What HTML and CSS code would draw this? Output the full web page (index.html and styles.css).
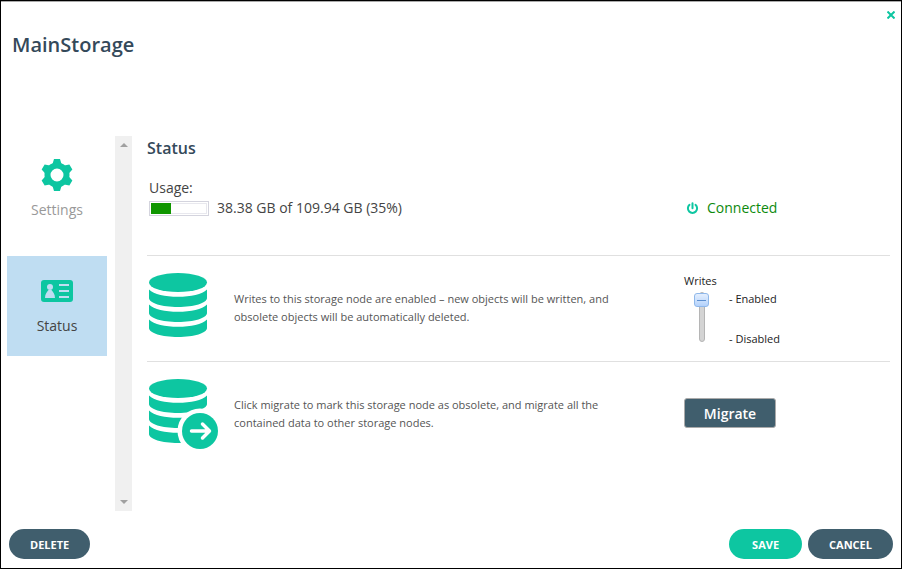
FILE: index.html
```html
<!DOCTYPE html>
<html lang="en">
<head>
  <meta charset="UTF-8">
  <meta name="viewport" content="width=device-width, initial-scale=1">
  <title>MainStorage</title>
  <link rel="stylesheet" href="styles.css">
</head>
<body>

  <div class="dialog" role="dialog" aria-labelledby="dialogTitle">
    <header class="dialog-header">
      <h1 id="dialogTitle">MainStorage</h1>
      <button type="button" class="close" aria-label="Close">
        <svg width="8" height="8" viewBox="0 0 8 8"><path d="M.5.5l7 7M7.500.5l-7 7" stroke="currentColor" stroke-width="2"/></svg>
      </button>
    </header>

    <div class="dialog-body">
      <nav class="sidebar">
        <a href="#settings" class="tab">
          <svg width="32" height="32" viewBox="-16 -16 32 32" fill="currentColor">
            <path d="M-3-16h6l1.500 5h-9zM-3 16h6l1.500-5h-9z"/>
            <path d="M-3-16h6l1.500 5h-9zM-3 16h6l1.500-5h-9z" transform="rotate(60)"/>
            <path d="M-3-16h6l1.500 5h-9zM-3 16h6l1.500-5h-9z" transform="rotate(120)"/>
            <circle r="9.500" fill="none" stroke="currentColor" stroke-width="6"/>
          </svg>
          <span>Settings</span>
        </a>
        <a href="#status" class="tab active">
          <svg width="32" height="32" viewBox="0 0 32 32">
            <rect y="5" width="32" height="22" rx="3" fill="currentColor"/>
            <g fill="#bfddf2">
              <circle cx="9" cy="12" r="3"/>
              <path d="M4 23c0-4 2-6 3.500-8h3c1.500 2 3.500 4 3.500 8z"/>
            </g>
            <path d="M18 10h10M18 16h10M18 22h10" stroke="#bfddf2" stroke-width="2"/>
          </svg>
          <span>Status</span>
        </a>
      </nav>

      <div class="scrollbar" aria-hidden="true">
        <span class="arrow-up"></span>
        <span class="arrow-down"></span>
      </div>

      <main class="content" id="status">
        <h2>Status</h2>

        <section class="row usage-row">
          <div class="usage">
            <div id="usageLabel">Usage:</div>
            <div class="usage-line">
              <div class="bar" role="meter" aria-labelledby="usageLabel" aria-valuemin="0" aria-valuemax="100" aria-valuenow="35">
                <div class="bar-track"><div class="bar-fill" style="width: 35%"></div></div>
              </div>
              <span>38.38 GB of 109.94 GB (35%)</span>
            </div>
          </div>
          <div class="control connected">
            <svg width="13" height="13" viewBox="0 0 13 13" fill="none" stroke="#0dc6a1" stroke-width="2" stroke-linecap="round">
              <path d="M3.500 2.800a4.600 4.600 0 1 0 6 0M6.500 1.200v5"/>
            </svg>
            <span>Connected</span>
          </div>
        </section>

        <section class="row">
          <div class="picture">
            <svg width="70" height="72" viewBox="0 0 70 72" fill="#0dc6a1">
              <ellipse cx="29" cy="9.500" rx="29" ry="9.500"/>
              <path d="M0 16.500c5 5 16 7.300 29 7.300s24-2.300 29-7.300v8.500c0 5-13 9-29 9s-29-4-29-9z"/>
              <path d="M0 31.500c5 5 16 7.300 29 7.300s24-2.300 29-7.300v8.500c0 5-13 9-29 9s-29-4-29-9z"/>
              <path d="M0 46.500c5 5 16 7.300 29 7.300s24-2.300 29-7.300v8.500c0 5-13 9-29 9s-29-4-29-9z"/>
            </svg>
          </div>
          <p>Writes to this storage node are enabled – new objects will be written, and obsolete objects will be automatically deleted.</p>
          <div class="control writes">
            <label for="writes">Writes</label>
            <div class="slider">
              <input type="range" id="writes" min="0" max="1" value="1">
              <div class="slider-text">
                <span>- Enabled</span>
                <span>- Disabled</span>
              </div>
            </div>
          </div>
        </section>

        <section class="row">
          <div class="picture">
            <svg width="70" height="72" viewBox="0 0 70 72" fill="#0dc6a1">
              <ellipse cx="29" cy="9.500" rx="29" ry="9.500"/>
              <path d="M0 16.500c5 5 16 7.300 29 7.300s24-2.300 29-7.300v8.500c0 5-13 9-29 9s-29-4-29-9z"/>
              <path d="M0 31.500c5 5 16 7.300 29 7.300s24-2.300 29-7.300v8.500c0 5-13 9-29 9s-29-4-29-9z"/>
              <path d="M0 46.500c5 5 16 7.300 29 7.300s24-2.300 29-7.300v8.500c0 5-13 9-29 9s-29-4-29-9z"/>
              <circle cx="51" cy="52" r="20.500" fill="#fff" stroke="#fff" stroke-width="4"/>
              <circle cx="51" cy="52" r="18"/>
              <path d="M42.500 52h17M53.500 45l7 7-7 7" fill="none" stroke="#fff" stroke-width="3.500" stroke-linecap="round" stroke-linejoin="round"/>
            </svg>
          </div>
          <p>Click migrate to mark this storage node as obsolete, and migrate all the contained data to other storage nodes.</p>
          <div class="control">
            <button type="button" class="migrate">Migrate</button>
          </div>
        </section>
      </main>
    </div>

    <footer class="dialog-footer">
      <button type="button" class="btn delete">DELETE</button>
      <button type="button" class="btn save">SAVE</button>
      <button type="button" class="btn">CANCEL</button>
    </footer>
  </div>

</body>
</html>
```
FILE: styles.css
```css
* {
  box-sizing: border-box;
}
body {
  margin: 0;
  font-family: "Open Sans", "Noto Sans", sans-serif;
  font-size: 14px;
  line-height: 20px;
  color: #444;
  background: #fff;
}
h1, h2, p {
  margin: 0;
}
button {
  font-family: inherit;
  cursor: pointer;
}
svg {
  display: block;
}

.dialog {
  display: flex;
  flex-direction: column;
  min-height: 100vh;
  border: 1px solid #000;
}
.dialog-header {
  display: flex;
  justify-content: space-between;
  align-items: flex-start;
  height: 135px;
  padding: 0 6px 0 11px;
  border-top: 1px solid #aaa;
}
.dialog-header h1 {
  margin-top: 29px;
  font-size: 20px;
  font-weight: 600;
  line-height: 28px;
  color: #34495a;
}
.close {
  margin-top: 9px;
  padding: 0;
  border: none;
  background: none;
  color: #0dc6a1;
}

.dialog-body {
  display: flex;
  flex: 1;
}
.sidebar {
  display: flex;
  flex-direction: column;
  gap: 16px;
  width: 114px;
  padding: 4px 8px 0 6px;
}
.tab {
  display: flex;
  flex-direction: column;
  align-items: center;
  gap: 9px;
  height: 100px;
  padding-top: 19px;
  color: #999;
  text-decoration: none;
}
.tab svg {
  color: #0dc6a1;
}
.tab.active {
  background: #bfddf2;
  color: #444;
}

.scrollbar {
  display: flex;
  flex-direction: column;
  justify-content: space-between;
  align-items: center;
  width: 17px;
  padding: 7px 0;
  background: #f0f0f0;
}
.arrow-up, .arrow-down {
  border: 4px solid transparent;
}
.arrow-up {
  border-top: none;
  border-bottom-color: #a0a0a0;
}
.arrow-down {
  border-bottom: none;
  border-top-color: #a0a0a0;
}

.content {
  flex: 1;
  padding: 0 11px 0 15px;
}
.content h2 {
  font-size: 16px;
  font-weight: 600;
  line-height: 24px;
  color: #34495a;
}
.row {
  display: flex;
  align-items: flex-start;
  height: 106px;
  padding: 17px 0 0 2px;
  border-top: 1px solid #e0e0e0;
}
.row p {
  width: 390px;
  margin-top: 17px;
  font-size: 11px;
  line-height: 18px;
  color: #555;
}
.picture {
  width: 85px;
}
.control {
  width: 206px;
  margin-left: auto;
}

.usage-row {
  height: 95px;
  padding-top: 18px;
  border-top: none;
}
.usage-line {
  display: flex;
  align-items: center;
  gap: 8px;
}
.bar {
  width: 60px;
  height: 15px;
  padding: 1px;
  border: 1px solid #d4d4de;
}
.bar-track {
  height: 11px;
  box-shadow: inset 0 0 0 1px #e8e8ee;
}
.bar-fill {
  height: 100%;
  background: #109600;
}
.connected {
  display: flex;
  align-items: center;
  gap: 8px;
  margin-top: 20px;
  padding-left: 2px;
  color: #0d8a0d;
}

.writes {
  font-size: 11px;
  line-height: 16px;
  color: #222;
}
.writes label {
  display: block;
}
.slider {
  display: flex;
  gap: 19px;
  padding: 2px 0 0 10px;
}
.slider input {
  appearance: none;
  writing-mode: vertical-lr;
  direction: rtl;
  width: 16px;
  height: 50px;
  margin: 1px 0 0;
  background: none;
}
.slider input::-webkit-slider-runnable-track {
  width: 6px;
  height: 50px;
  border: 1px solid #b5b5b5;
  border-radius: 3px;
  background: #d4d4d4;
}
.slider input::-webkit-slider-thumb {
  appearance: none;
  width: 15px;
  height: 14px;
  margin-top: -1px;
  margin-left: -6px;
  border: 1px solid #8fb8ea;
  border-radius: 3px;
  background: linear-gradient(#5c8fd0, #5c8fd0) center / 9px 1px no-repeat, linear-gradient(#e4effe, #b4d2fb);
}
.slider-text {
  display: flex;
  flex-direction: column;
  justify-content: space-between;
  height: 56px;
}
.migrate {
  width: 92px;
  height: 30px;
  margin-top: 19px;
  padding: 0;
  border: 1px solid #aaa;
  border-radius: 3px;
  background: #405e6d;
  color: #fff;
  font-size: 14px;
  font-weight: 600;
}

.dialog-footer {
  display: flex;
  gap: 6px;
  padding: 18px 8px 9px;
}
.btn {
  height: 30px;
  padding: 0 21px;
  border: none;
  border-radius: 15px;
  background: #405e6d;
  color: #fff;
  font-size: 11px;
  font-weight: 700;
}
.delete {
  margin-right: auto;
}
.save {
  padding: 0 23px;
  background: #0dc6a1;
}
```
